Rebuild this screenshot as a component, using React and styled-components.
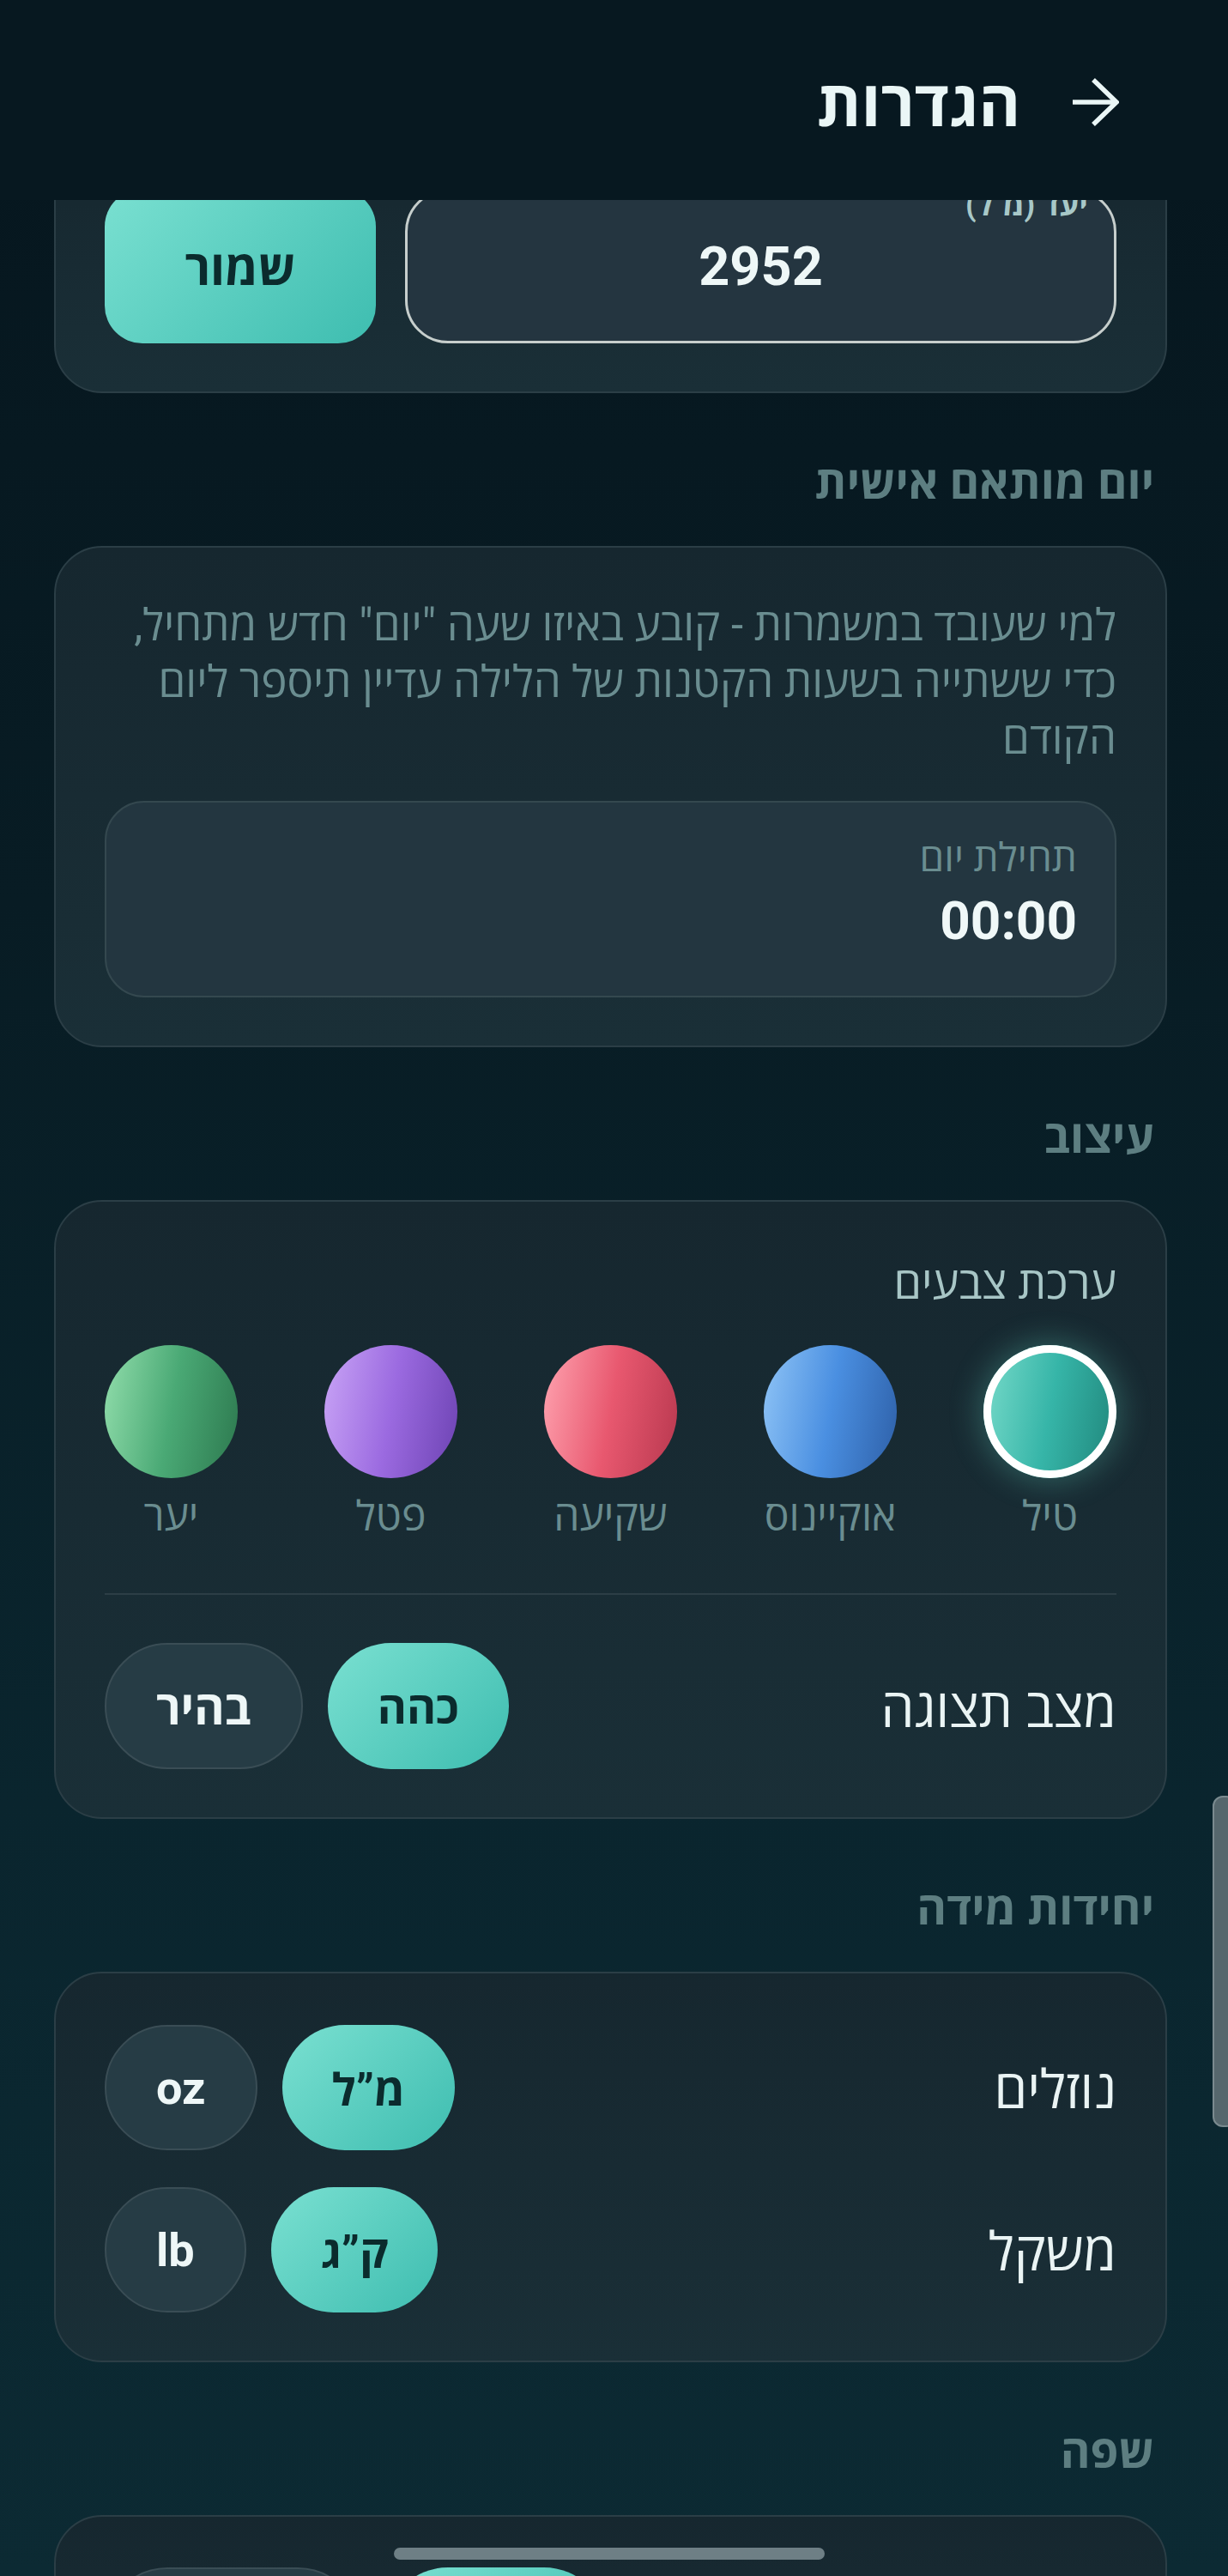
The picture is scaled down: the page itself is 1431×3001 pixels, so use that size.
import React from 'react'
import styled, { createGlobalStyle, css } from 'styled-components'

const font = `Roboto, "Open Sans", "Noto Sans", "Liberation Sans", sans-serif`

const Global = createGlobalStyle`
  html, body {
    margin: 0;
    padding: 0;
    overflow: hidden;
    background: #071820;
  }
  * { box-sizing: border-box; }
`

const Screen = styled.div`
  position: relative;
  height: 3001px;
  overflow: hidden;
  direction: rtl;
  font-family: ${font};
  background: linear-gradient(180deg, #06161e 0%, #081c24 35%, #0a252e 70%, #0c2a33 100%);
`

const Header = styled.header`
  position: absolute;
  top: 0;
  left: 0;
  right: 0;
  z-index: 5;
  height: 233px;
  background: #071820;
  display: flex;
  align-items: center;
  gap: 59px;
  padding: 4px 127px 0 0;
`

const Title = styled.h1`
  margin: 0;
  font-size: 74px;
  font-weight: 700;
  color: #eaf6f6;
`

const Main = styled.main`
  padding: 160px 71px 0 63px;
`

const Card = styled.section`
  border-radius: 56px;
  border: 2px solid #2b3e46;
  background: linear-gradient(180deg, #16272f 0%, #1a2f37 100%);
  padding: ${p => p.$pad || '58px 57px 56px 57px'};
`

const SectionLabel = styled.h2`
  margin: 78px 15px 46px 0;
  height: 54px;
  line-height: 54px;
  font-size: 53px;
  font-weight: 700;
  color: #5d7e81;
`

const GoalRow = styled.div`
  display: flex;
  align-items: flex-end;
  gap: 34px;
`

const GoalInput = styled.div`
  position: relative;
  flex: 1;
  height: 180px;
  border-radius: 50px;
  border: 3px solid #c6cecc;
  background: #243540;
  display: flex;
  align-items: center;
  justify-content: center;
  font-size: 63px;
  font-weight: 700;
  color: #eef7f7;
`

const FloatLabel = styled.span`
  position: absolute;
  top: -4px;
  right: 30px;
  font-size: 36px;
  line-height: 40px;
  color: #a8c8c8;
`

const TealButton = styled.button`
  font-family: ${font};
  border: none;
  background: linear-gradient(135deg, #7ae0d1 0%, #3ebdb0 100%);
  color: #0b2b2d;
  font-weight: 700;
  cursor: pointer;
`

const SaveButton = styled(TealButton)`
  width: 316px;
  height: 180px;
  border-radius: 44px;
  font-size: 56px;
`

const Description = styled.p`
  margin: 0;
  font-size: 51px;
  line-height: 66px;
  color: #6a8d90;
`

const TimeBox = styled.div`
  margin-top: 39px;
  height: 229px;
  border-radius: 46px;
  border: 2px solid #34484f;
  background: #233640;
  padding: 40px 44px 0;
`

const TimeLabel = styled.div`
  font-size: 46px;
  line-height: 48px;
  color: #6a8d90;
`

const TimeValue = styled.div`
  margin-top: 10px;
  font-size: 62px;
  line-height: 80px;
  font-weight: 700;
  color: #f0f8f8;
`

const PaletteTitle = styled.div`
  margin-top: 8px;
  font-size: 52px;
  line-height: 60px;
  color: #a8c6c6;
`

const Swatches = styled.div`
  margin-top: 41px;
  display: flex;
  justify-content: space-between;
`

const Swatch = styled.div`
  width: 155px;
  display: flex;
  flex-direction: column;
  align-items: center;
`

const Dot = styled.div`
  width: 155px;
  height: 155px;
  border-radius: 50%;
  background: linear-gradient(100deg, ${p => p.$c[0]} 0%, ${p => p.$c[1]} 50%, ${p => p.$c[2]} 100%);
  ${p => p.$selected && css`
    box-shadow: inset 0 0 0 9px #ffffff, 0 0 34px 6px rgba(100, 215, 195, 0.28);
  `}
`

const SwatchName = styled.span`
  margin-top: 17px;
  font-size: 48px;
  line-height: 56px;
  color: #6a8d90;
  white-space: nowrap;
`

const Divider = styled.hr`
  margin: 61px 0 56px;
  border: none;
  height: 2px;
  background: #2c3e46;
`

const Row = styled.div`
  display: flex;
  align-items: center;
  justify-content: space-between;
  & + & { margin-top: 43px; }
`

const RowLabel = styled.span`
  font-size: 62px;
  font-weight: 500;
  color: #eaf4f4;
`

const Pills = styled.div`
  display: flex;
  gap: 29px;
`

const pillBase = css`
  height: ${p => p.$h || 146}px;
  padding: 0 58px;
  border-radius: 80px;
  font-family: ${font};
  font-weight: 700;
  white-space: nowrap;
`

const ActivePill = styled(TealButton)`
  ${pillBase}
  font-size: 52px;
`

const Pill = styled.button`
  ${pillBase}
  font-size: 54px;
  background: #263c45;
  border: 2px solid #3a4d55;
  color: #eef7f7;
`

const ScrollThumb = styled.div`
  position: absolute;
  top: 2092px;
  right: -10px;
  width: 28px;
  height: 386px;
  border-radius: 12px;
  background: #56676d;
  border: 2px solid #7a8a8f;
`

const HomeBar = styled.div`
  position: absolute;
  left: 459px;
  top: 2968px;
  width: 502px;
  height: 14px;
  border-radius: 7px;
  background: #6e7f85;
  z-index: 4;
`

const BackArrow = () => (
  <svg width="56" height="56" viewBox="0 0 56 56" fill="none" stroke="#eaf6f6" strokeWidth="5.5">
    <path d="M2 28H53" />
    <path d="M26 2L53 28L26 54" />
  </svg>
)

const swatches = [
  { name: 'טיל', c: ['#7adccb', '#36b5a8', '#1f857a'], selected: true },
  { name: 'אוקיינוס', c: ['#8fc4f6', '#4a8fe1', '#2e60a8'] },
  { name: 'שקיעה', c: ['#ffa3b0', '#e8586f', '#b8384f'] },
  { name: 'פטל', c: ['#c9a4f6', '#9b6ae0', '#6d43b3'] },
  { name: 'יער', c: ['#92deac', '#4aa975', '#2d794f'] },
]

const units = [
  { label: 'נוזלים', on: 'מ”ל', off: 'oz' },
  { label: 'משקל', on: 'ק”ג', off: 'lb' },
]

export default function App() {
  return (
    <Screen>
      <Global />
      <Header>
        <BackArrow />
        <Title>הגדרות</Title>
      </Header>

      <Main>
        <Card>
          <GoalRow>
            <GoalInput>
              <FloatLabel>יעד (מ"ל)</FloatLabel>
              2952
            </GoalInput>
            <SaveButton>שמור</SaveButton>
          </GoalRow>
        </Card>

        <SectionLabel>יום מותאם אישית</SectionLabel>
        <Card>
          <Description>
            למי שעובד במשמרות - קובע באיזו שעה "יום" חדש מתחיל, כדי ששתייה בשעות הקטנות של הלילה עדיין תיספר ליום הקודם
          </Description>
          <TimeBox>
            <TimeLabel>תחילת יום</TimeLabel>
            <TimeValue>00:00</TimeValue>
          </TimeBox>
        </Card>

        <SectionLabel>עיצוב</SectionLabel>
        <Card>
          <PaletteTitle>ערכת צבעים</PaletteTitle>
          <Swatches>
            {swatches.map(s => (
              <Swatch key={s.name}>
                <Dot $c={s.c} $selected={s.selected} />
                <SwatchName>{s.name}</SwatchName>
              </Swatch>
            ))}
          </Swatches>
          <Divider />
          <Row>
            <RowLabel>מצב תצוגה</RowLabel>
            <Pills>
              <ActivePill $h={147}>כהה</ActivePill>
              <Pill $h={147}>בהיר</Pill>
            </Pills>
          </Row>
        </Card>

        <SectionLabel>יחידות מידה</SectionLabel>
        <Card $pad="60px 57px 56px 57px">
          {units.map(u => (
            <Row key={u.label}>
              <RowLabel>{u.label}</RowLabel>
              <Pills>
                <ActivePill>{u.on}</ActivePill>
                <Pill>{u.off}</Pill>
              </Pills>
            </Row>
          ))}
        </Card>

        <SectionLabel>שפה</SectionLabel>
        <Card $pad="59px 57px 56px 57px">
          <Row>
            <RowLabel>שפת ממשק</RowLabel>
            <Pills>
              <ActivePill>עברית</ActivePill>
              <Pill>English</Pill>
            </Pills>
          </Row>
        </Card>
      </Main>

      <ScrollThumb />
      <HomeBar />
    </Screen>
  )
}
